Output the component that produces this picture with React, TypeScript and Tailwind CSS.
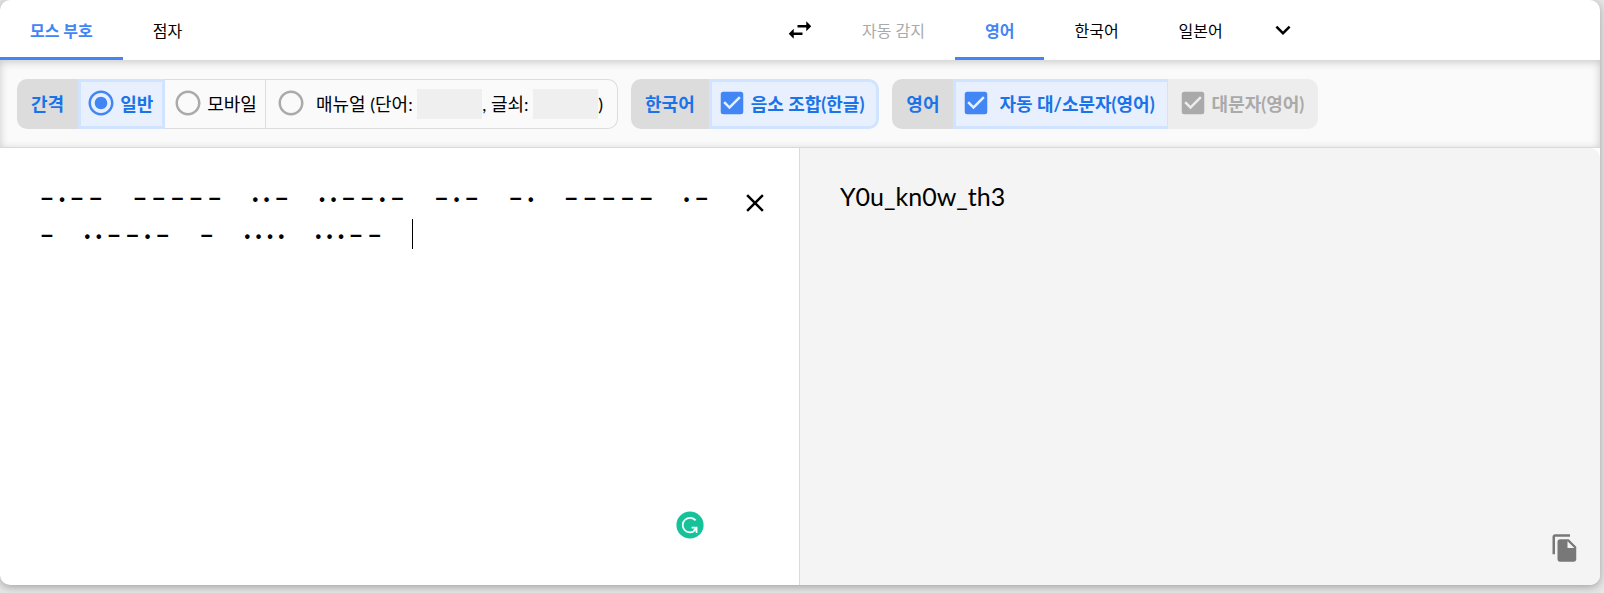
import { ReactNode, useState } from "react"
import { MdCheckBox, MdClose, MdExpandMore, MdFileCopy, MdRadioButtonChecked, MdRadioButtonUnchecked, MdSwapHoriz } from "react-icons/md"

const LETTERS=["−·−−","−−−−−","··−","··−−·−","−·−","−·","−−−−−","·−−","··−−·−","−","····","···−−",""];
// thin spaces keep the letters apart
const MORSE=LETTERS.join("\u2006\u2009\u2006");

export default function App()
{
    const [source,setSource]=useState("모스 부호");
    const [target,setTarget]=useState("영어");
    const [spacing,setSpacing]=useState("normal");
    const [combine,setCombine]=useState(true);
    const [autoCase,setAutoCase]=useState(true);
    const [text,setText]=useState(MORSE);

    return <div className="min-h-screen flex flex-col bg-[#e6e6e6] pr-1 pb-2 text-black font-['Lato','Noto_Sans_CJK_KR',sans-serif]">
        <div className="grow flex flex-col rounded-[10px] bg-white overflow-hidden shadow-[0_2px_8px_rgba(0,0,0,0.3)]">
            <header className="grid grid-cols-[1fr_auto_1fr] h-15">
                <nav className="flex">
                    <Tab label="모스 부호" active={source==="모스 부호"} onClick={()=>setSource("모스 부호")}/>
                    <Tab label="점자" active={source==="점자"} onClick={()=>setSource("점자")}/>
                </nav>
                <button aria-label="바꾸기" className="w-16 flex items-center justify-center">
                    <MdSwapHoriz size={30}/>
                </button>
                <nav className="flex">
                    <Tab label="자동 감지" disabled/>
                    <Tab label="영어" active={target==="영어"} onClick={()=>setTarget("영어")}/>
                    <Tab label="한국어" active={target==="한국어"} onClick={()=>setTarget("한국어")}/>
                    <Tab label="일본어" active={target==="일본어"} onClick={()=>setTarget("일본어")}/>
                    <button aria-label="더 보기" className="w-15 flex items-center justify-center">
                        <MdExpandMore size={30}/>
                    </button>
                </nav>
            </header>

            <section className="flex flex-wrap gap-[13px] px-[17px] pt-[19px] pb-[18px] bg-[#fafafa] border-b border-[#dadada] shadow-[inset_0_2px_8px_rgba(0,0,0,0.2)]">
                <Group title="간격">
                    <Option type="radio" name="spacing" checked={spacing==="normal"} onChange={()=>setSpacing("normal")}>일반</Option>
                    <Option type="radio" name="spacing" checked={spacing==="mobile"} onChange={()=>setSpacing("mobile")}>모바일</Option>
                    <div className="flex items-center pl-2.5 pr-3.5 border border-l-0 border-[#dcdcdc] rounded-r-[10px]">
                        <label className="flex items-center gap-2.5">
                            <Mark type="radio" name="spacing" checked={spacing==="manual"} onChange={()=>setSpacing("manual")}/>
                            <span className="whitespace-pre">매뉴얼 (단어: </span>
                        </label>
                        <input aria-label="단어" disabled={spacing!=="manual"} className="w-[65px] h-[30px] bg-[#efefef]"/>
                        <span className="whitespace-pre">, 글쇠: </span>
                        <input aria-label="글쇠" disabled={spacing!=="manual"} className="w-[65px] h-[30px] bg-[#efefef]"/>
                        <span>)</span>
                    </div>
                </Group>
                <Group title="한국어">
                    <Option type="checkbox" last checked={combine} onChange={()=>setCombine(!combine)}>음소 조합(한글)</Option>
                </Group>
                <Group title="영어">
                    <Option type="checkbox" wide checked={autoCase} onChange={()=>setAutoCase(!autoCase)}>자동 대/소문자(영어)</Option>
                    <Option type="checkbox" last disabled checked>대문자(영어)</Option>
                </Group>
            </section>

            <main className="grow grid grid-cols-2">
                <div className="relative flex border-r border-[#dadada]">
                    <textarea aria-label="모스 부호" value={text} onChange={(e)=>setText(e.target.value)} spellCheck={false}
                        className="grow resize-none outline-none pl-10 pt-[31px] text-2xl leading-[37px] font-bold tracking-[0.2em] break-all"/>
                    <div className="absolute left-[412px] top-[71px] w-px h-[30px] bg-black"></div>
                    <div className="w-[84px] shrink-0 pt-10 pl-[25px]">
                        <button aria-label="지우기" onClick={()=>setText("")} className="size-[30px]"><MdClose size={30}/></button>
                    </div>
                    <Grammarly/>
                </div>
                <div className="flex flex-col justify-between bg-[#f4f4f4] rounded-tr-[10px] pl-10 pr-5 pt-[30px] pb-[22px]">
                    <p className="text-[25px] leading-[37px]">Y0u_kn0w_th3</p>
                    <button aria-label="복사" className="self-end text-[#787878]"><MdFileCopy size={30}/></button>
                </div>
            </main>
        </div>
    </div>
}

function Tab({label,active,disabled,onClick}:tabProps)
{
    return <button onClick={onClick} disabled={disabled}
        className={`px-[30px] pt-[5px] text-base border-b-3 ${active ? "font-bold text-[#4285f4] border-[#4285f4]" : disabled ? "text-[#aaaaaa] border-transparent" : "border-transparent"}`}>
        {label}
    </button>
}

function Group({title,children}:{title:string,children:ReactNode})
{
    return <fieldset aria-label={title} className="flex h-[50px] text-[18px] leading-6">
        <div className="flex items-center px-3.5 rounded-l-[10px] bg-[#dcdcdc] text-[#1a73e8] font-bold">{title}</div>
        {children}
    </fieldset>
}

function Option({children,wide,last,...mark}:optionProps)
{
    const color=mark.disabled ? "bg-[#ededed] text-[#aaaaaa] font-bold pl-2.5 pr-3.5"
        : mark.checked ? "bg-[#e8f0fe] text-[#1a73e8] font-bold border-3 border-[#d0e3ff]"
        : "border border-l-0 border-[#dcdcdc]";
    const padding=mark.disabled ? "" : mark.type==="checkbox" ? "pl-[5px] pr-3" : mark.checked ? "pl-[5px] pr-[9px]" : "px-2";
    return <label className={`flex items-center ${wide ? "gap-2 border-r" : "gap-1"} ${last ? "rounded-r-[10px]" : ""} ${color} ${padding}`}>
        <Mark {...mark}/>
        <span className="whitespace-nowrap">{children}</span>
    </label>
}

// native input stays underneath, the icon is painted over it
function Mark({type,name,checked,disabled,onChange}:markProps)
{
    const tone=disabled ? "text-[#aaaaaa]" : checked ? "text-[#4285f4]" : "text-[#aaaaaa]";
    return <span className={`relative size-[30px] mb-0.5 shrink-0 ${tone}`}>
        <input type={type} name={name} checked={checked} disabled={disabled} onChange={onChange || (()=>{})} className="absolute inset-0 appearance-none"/>
        {type==="checkbox" ? <MdCheckBox size={30}/> : checked ? <MdRadioButtonChecked size={30}/> : <MdRadioButtonUnchecked size={30}/>}
    </span>
}

function Grammarly()
{
    return <svg viewBox="0 0 28 28" className="absolute right-[95px] bottom-[46px] size-7">
        <circle cx="14" cy="14" r="13.6" fill="#15c39a"/>
        <path d="M19.6 9.4A7.3 7.3 0 1 0 19 19.4M15.6 16.6H20.6V22M20.6 16.6L17.4 20.4" fill="none" stroke="#fff" strokeWidth="1.7"/>
    </svg>
}

interface tabProps{
    label:string
    active?:boolean
    disabled?:boolean
    onClick?:() => void
}

interface markProps{
    type:"radio" | "checkbox"
    name?:string
    checked:boolean
    disabled?:boolean
    onChange?:() => void
}

interface optionProps extends markProps{
    children:ReactNode
    wide?:boolean
    last?:boolean
}
